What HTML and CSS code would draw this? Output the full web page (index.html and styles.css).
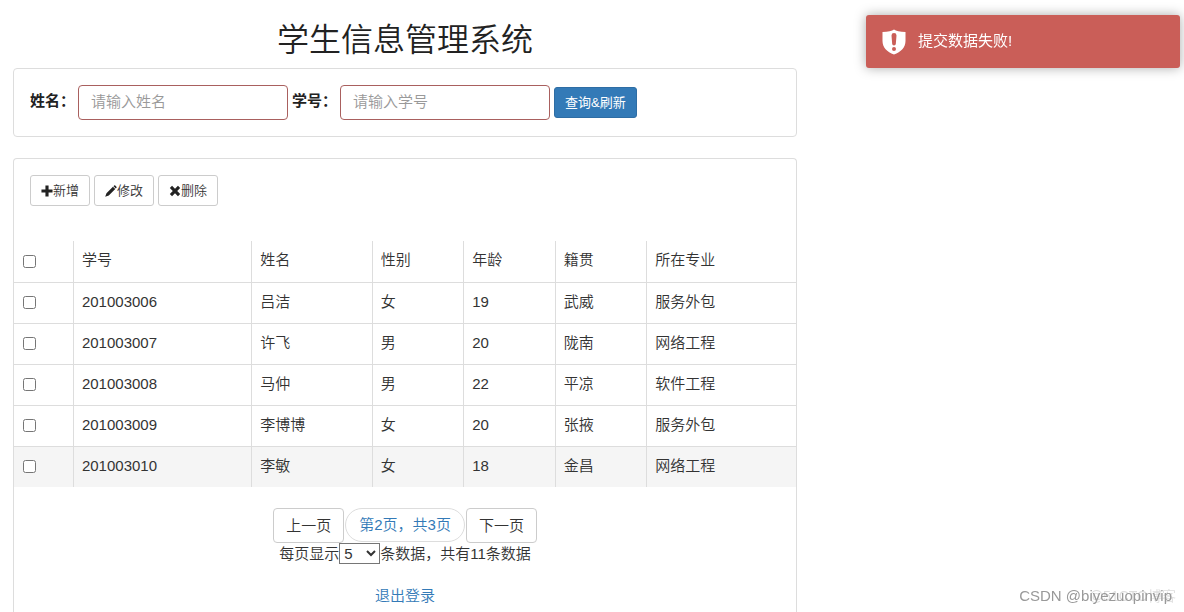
FILE: index.html
```html
<!DOCTYPE html>
<html lang="zh-CN">
<head>
<meta charset="utf-8">
<title>学生信息管理系统</title>
<link rel="stylesheet" href="styles.css">
</head>
<body>
<main class="page">
  <h1 class="title">学生信息管理系统</h1>
  <form class="panel search">
    <label class="search-label" for="name">姓名：</label>
    <input class="field" id="name" type="text" placeholder="请输入姓名">
    <label class="search-label" for="number">学号：</label>
    <input class="field" id="number" type="text" placeholder="请输入学号">
    <button class="btn btn-primary" type="button">查询&amp;刷新</button>
  </form>
  <section class="panel list">
    <div class="toolbar">
      <button class="btn" type="button"><svg class="icon" viewBox="0 0 13 13" aria-hidden="true"><path d="M4.800.5h3.400v4.300H12.500v3.400H8.200V12.500H4.800V8.200H.5V4.800h4.300z"/></svg>新增</button>
      <button class="btn" type="button"><svg class="icon" viewBox="0 0 13 13" aria-hidden="true"><path d="M.2 12.800l1.400-3.900L8.600 1.900l2.500 2.500-7 7zM9.200 1.300l.7-.7q.6-.5 1.200 0l1.300 1.300q.5.600 0 1.200l-.7.7z"/></svg>修改</button>
      <button class="btn" type="button"><svg class="icon" viewBox="0 0 13 13" aria-hidden="true"><path d="M3.300.9l3.200 3.200L9.700.9l2.400 2.400-3.200 3.200 3.200 3.200-2.400 2.400-3.200-3.200-3.200 3.200L.9 9.700l3.200-3.200L.9 3.300z"/></svg>删除</button>
    </div>
    <table class="students">
      <colgroup><col class="c-check"><col class="c-number"><col class="c-name"><col class="c-small"><col class="c-small"><col class="c-small"><col></colgroup>
      <thead>
        <tr><th><input class="check" type="checkbox" aria-label="全选"></th><th>学号</th><th>姓名</th><th>性别</th><th>年龄</th><th>籍贯</th><th>所在专业</th></tr>
      </thead>
      <tbody>
        <tr><td><input class="check" type="checkbox" aria-label="吕洁"></td><td>201003006</td><td>吕洁</td><td>女</td><td>19</td><td>武威</td><td>服务外包</td></tr>
        <tr><td><input class="check" type="checkbox" aria-label="许飞"></td><td>201003007</td><td>许飞</td><td>男</td><td>20</td><td>陇南</td><td>网络工程</td></tr>
        <tr><td><input class="check" type="checkbox" aria-label="马仲"></td><td>201003008</td><td>马仲</td><td>男</td><td>22</td><td>平凉</td><td>软件工程</td></tr>
        <tr><td><input class="check" type="checkbox" aria-label="李博博"></td><td>201003009</td><td>李博博</td><td>女</td><td>20</td><td>张掖</td><td>服务外包</td></tr>
        <tr class="active"><td><input class="check" type="checkbox" aria-label="李敏"></td><td>201003010</td><td>李敏</td><td>女</td><td>18</td><td>金昌</td><td>网络工程</td></tr>
      </tbody>
    </table>
    <nav class="pager">
      <button class="page-btn" type="button">上一页</button>
      <a class="page-info" href="#">第2页，共3页</a>
      <button class="page-btn" type="button">下一页</button>
    </nav>
    <div class="page-size">
      <label for="size">每页显示</label>
      <select class="size" id="size"><option>5</option><option>10</option></select>
      <span>条数据，共有11条数据</span>
    </div>
    <a class="logout" href="#">退出登录</a>
  </section>
</main>
<div class="toast" role="alert">
  <svg class="shield" viewBox="0 0 24 26" aria-hidden="true"><path fill="#fff" fill-rule="evenodd" d="M12 .5Q15 2.700 23.500 2.900V12c0 6.500-4.500 11-11.500 13.500C5 23 .5 18.500.5 12V2.900Q9 2.700 12 .5zM9.500 6.500l.7 8.600q.1 1.400 1.800 1.400t1.800-1.400l.7-8.600Q14.500 4.100 12 4.100T9.500 6.500zM12 18a2 2 0 1 0 0 4 2 2 0 0 0 0-4z"/></svg>
  <span class="toast-text">提交数据失败!</span>
</div>
<div class="watermark"><span class="mark-back">@51CTO博客</span><span class="mark-front">CSDN @biyezuopinvip</span></div>
</body>
</html>
```
FILE: styles.css
```css
* { box-sizing: border-box; }

body {
  margin: 0;
  font: 350 15px/24px "Liberation Sans", "Noto Sans CJK SC", sans-serif;
  color: #333;
  background: #fff;
}

button, input, select { font: inherit; color: inherit; }

.page {
  display: flex;
  flex-direction: column;
  width: 68%;
  min-height: 100vh;
  padding: 20px 8px 0 13px;
}

.title {
  margin: 0 0 8px;
  font-size: 32px;
  line-height: 40px;
  font-weight: 350;
  text-align: center;
  color: #222;
}

.panel {
  border: 1px solid #ddd;
  border-radius: 4px;
}

.search {
  display: flex;
  align-items: center;
  gap: 4px;
  padding: 16px;
  margin-bottom: 21px;
}

.search-label {
  width: 44px;
  padding-bottom: 4px;
  white-space: nowrap;
  font-weight: 700;
  color: #222;
}

.field {
  width: 210px;
  height: 35px;
  padding: 0 12px 2px;
  border: 1px solid #a9605e;
  border-radius: 4px;
  background: #fff;
}

.field::placeholder { color: #999; opacity: 1; }

.btn {
  display: inline-flex;
  align-items: center;
  height: 31px;
  padding: 0 10px;
  border: 1px solid #ccc;
  border-radius: 3px;
  font-size: 13px;
  background: #fff;
}

.btn-primary {
  color: #fff;
  font-weight: 400;
  background: #337ab7;
  border-color: #2e6da4;
}

.icon { width: 12px; height: 12px; fill: #222; }

.list {
  display: flex;
  flex: 1;
  flex-direction: column;
  border-bottom: 0;
  border-radius: 4px 4px 0 0;
}

.toolbar {
  display: flex;
  gap: 4px;
  padding: 16px 16px 35px;
}

.students {
  width: 100%;
  table-layout: fixed;
  border-collapse: collapse;
}

.c-check { width: 7.6%; }
.c-number { width: 22.8%; }
.c-name { width: 15.4%; }
.c-small { width: 11.7%; }

.students th, .students td {
  height: 41px;
  padding: 0 8px 2px;
  border: 1px solid #ddd;
  border-width: 1px 0 0 1px;
  font-weight: 350;
  text-align: left;
}

.students th { border-top: 0; }
.students th:first-child, .students td:first-child { border-left: 0; }
.active { background: #f5f5f5; }

.check {
  display: block;
  width: 13px;
  height: 13px;
  margin: 2px 0 0 1px;
}

.pager {
  display: flex;
  justify-content: center;
  align-items: flex-start;
  gap: 1px;
  margin-top: 21px;
}

.page-btn {
  height: 35px;
  padding: 0 12px;
  border: 1px solid #ccc;
  border-radius: 4px;
  background: #fff;
}

.page-info {
  padding: 4px 13px;
  border: 1px solid #ddd;
  border-radius: 17px;
}

.page-info, .logout { color: #337ab7; text-decoration: none; }

.page-size {
  display: flex;
  justify-content: center;
  height: 21px;
  line-height: 21px;
}

.size {
  width: 41px;
  height: 21px;
  padding: 0;
  border: 1px solid #767676;
  border-radius: 0;
  background: #fff;
}

.logout { align-self: center; margin-top: 20px; }

.toast {
  position: fixed;
  top: 15px;
  right: 4px;
  display: flex;
  align-items: center;
  gap: 12px;
  width: 314px;
  height: 53px;
  padding: 0 16px;
  border-radius: 3px;
  color: #fff;
  font-weight: 400;
  background: #ca5e58;
  box-shadow: 0 0 12px #aaa;
}

.shield { width: 24px; height: 26px; }
.toast-text { padding-bottom: 2px; }

.watermark {
  position: fixed;
  right: 8px;
  bottom: 4px;
  display: grid;
  justify-items: end;
}

.mark-back, .mark-front { grid-area: 1 / 1; }
.mark-back { color: #ddd; font-size: 14px; }
.mark-front { margin-right: 4px; color: #999; }
```
